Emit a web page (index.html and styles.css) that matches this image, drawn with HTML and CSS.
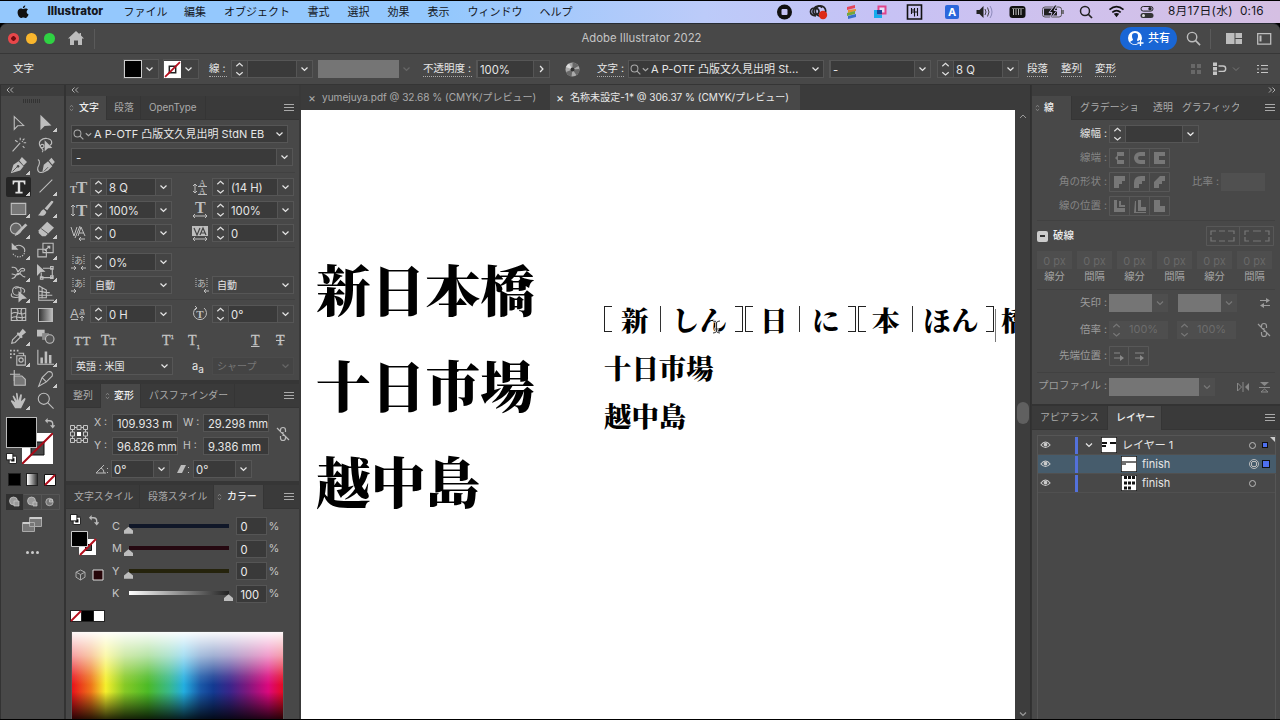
FILE: index.html
```html
<!DOCTYPE html>
<html lang="ja">
<head>
<meta charset="utf-8">
<title>Adobe Illustrator 2022</title>
<link rel="stylesheet" href="styles.css">
</head>
<body>
<svg class="defs" width="0" height="0">
  <symbol id="chev" viewBox="0 0 10 10"><path d="M2 3.6 5 6.4 8 3.6" fill="none" stroke="currentColor" stroke-width="1.3"/></symbol>
  <symbol id="step" viewBox="0 0 14 16"><path d="M3.8 5.2 7 2.4l3.2 2.8M3.8 11.2 7 14l3.2-2.8" fill="none" stroke="currentColor" stroke-width="1.2"/></symbol>
  <symbol id="burger" viewBox="0 0 10 10"><path d="M0 1.5h10M0 4.5h10M0 7.5h10" stroke="currentColor"/></symbol>
  <symbol id="updn" viewBox="0 0 6 10"><path d="M1 4 3 1.5 5 4M1 6l2 2.5L5 6" fill="none" stroke="#999" stroke-width=".8"/></symbol>
  <symbol id="dbl-l" viewBox="0 0 8 6"><path d="M3.500.500 1 3l2.500 2.500M7 .5 4.500 3 7 5.500" fill="none" stroke="#bbb" stroke-width=".9"/></symbol>
  <symbol id="none" viewBox="0 0 16 16"><path fill="#fff" d="M0 0h16v16H0z"/><path d="M5 5h6v6H5z" fill="#fff" stroke="#222" stroke-width="1.4"/><path d="M1 15 15 1" stroke="#b40e1c" stroke-width="1.7"/></symbol>
  <symbol id="search" viewBox="0 0 16 16"><circle cx="6.5" cy="6.5" r="5" fill="none" stroke="currentColor" stroke-width="1.5"/><path d="m10 10 5 5" stroke="currentColor" stroke-width="1.7"/></symbol>
  <symbol id="swap" viewBox="0 0 12 12"><path d="M3 3h3q3.500 0 3.500 3.500V9" fill="none" stroke="#bbb" stroke-width="1.500"/><path d="M4 0v6L1 3zM6.500 8h6l-3 3.500z" fill="#bbb"/></symbol>
  <symbol id="deflt" viewBox="0 0 12 12"><path d="M4.500 4.500h6v6h-6z" stroke="#fff" stroke-width="2.500" fill="#111"/><path d="M3.500 3.500h8v8h-8z" fill="none" stroke="#111"/><path d="M.5.500h7v7h-7z" fill="#fff" stroke="#111"/></symbol>
  <symbol id="eye" viewBox="0 0 12 10"><path d="M1 5q5-6.500 10 0-5 5.500-10 0z" fill="none" stroke="#ccc" stroke-width="1.200"/><circle cx="6" cy="4.600" r="2" fill="#ccc"/></symbol>
  <symbol id="unlink" viewBox="0 0 14 16"><path d="M4.500 6V4a2.500 2.500 0 0 1 5 0v2M4.500 10v2a2.500 2.500 0 0 0 5 0v-2M7 6v4M1 2l12 12" fill="none" stroke="currentColor" stroke-width="1.200"/></symbol>
</svg>

<header class="menubar">
  <svg viewBox="0 0 14 16" class="apple"><path d="M9.600 0c.1 1.900-1 3.300-2.700 3.500C6.700 1.800 8 .4 9.600 0zM7.200 4.600C8 4.600 9 3.700 10.200 3.800c1.100 0 2.100.5 2.700 1.400-2.500 1.600-2 4.700.6 5.700-.6 1.700-2.100 4.100-3.400 4.100-1 0-1.500-.6-2.700-.6S5.600 15 4.700 15C2.600 15 .5 11 .7 8.100.9 5.300 2.600 3.800 4.500 3.800c1.100 0 1.900.8 2.700.8z"/></svg>
  <b>Illustrator</b><span>ファイル</span><span>編集</span><span>オブジェクト</span><span>書式</span><span>選択</span><span>効果</span><span>表示</span><span>ウィンドウ</span><span>ヘルプ</span>
  <svg width="390" height="20" viewBox="776 2 390 20" class="status">
    <circle cx="784.500" cy="12" r="7.500" fill="#111"/><rect x="781.500" y="9" width="6" height="6" rx="1" fill="#c5c4f5"/>
    <g fill="none" stroke="#222" stroke-width="1.700"><path d="M816 16c-3-.3-5.500-1.800-5.500-4.300 0-2.400 2-3.700 4-3.700 1-2 5.500-3.300 7.500-.3"/><circle cx="816" cy="11.500" r="3"/><circle cx="820.500" cy="11" r="5.200"/></g><circle cx="823" cy="15" r="4.200" fill="#dd2a16"/>
    <path d="m847 7 8-2v3l-8 2z" fill="#e4465b"/><path d="m848 10 8-1v2l-8 2z" fill="#e99232"/><path d="m847 13 8-2v3l-8 2z" fill="#71a83d"/><path d="m848 16 8-2v3l-8 2z" fill="#3870cb"/>
    <path d="M874 10h8v8h-8z" fill="#15acee"/><path d="M878.500 6.500h7v7h-7z" fill="#fff" fill-opacity=".5" stroke="#e0458b" stroke-width="2"/><path d="M877 10h5v4h-5z" fill="#19459c"/>
    <path d="M907.500 5h14v14h-14z" fill="none" stroke="#111" stroke-width="1.600"/><path d="M911.500 8v4h6M911.500 10h3M914.500 8v8.500M917.500 8v8M911.500 12v2" stroke="#111" stroke-width="1.100" fill="none"/>
    <rect x="945" y="5" width="14" height="14" rx="2" fill="#2b67dc"/><text x="952" y="16" text-anchor="middle" font-size="11" font-weight="700" fill="#fff">A</text>
    <path d="M976.500 10h3l4-4v12l-4-4h-3z" fill="#222"/><path d="M985 9q2 3 0 6M987.500 7.500q3 4.500 0 9" fill="none" stroke="#444"/><path d="M990 6q4 6 0 12" fill="none" stroke="#8d8abb"/>
    <rect x="1009.500" y="6" width="16" height="12" rx="3" fill="#111"/><path d="M1013.500 9v6M1016 9v6M1018.500 9v6M1021 9v6" stroke="#bbb"/><path d="M1012 8.500h12" stroke="#bbb" stroke-width=".6"/>
    <rect x="1042.500" y="7" width="19" height="10" rx="2.500" fill="none" stroke="#555"/><path d="M1044 8.500h13v7h-13z" fill="#222"/><path d="m1055 5-6 7.500h3l-2 6.500 7-8.500h-3l3-5.500z" fill="#111" stroke="#cfc3ee" stroke-width=".9"/><path d="M1063 10v4" stroke="#555" stroke-width="1.500"/>
    <circle cx="1085" cy="11" r="4.500" fill="none" stroke="#222" stroke-width="1.500"/><path d="m1088 14 4 4" stroke="#222" stroke-width="1.700"/>
    <g fill="none" stroke="#111" stroke-width="1.700"><path d="M1109.500 9.700q7-6 14 0M1112.300 12.400q4.200-3.600 8.400 0"/></g><path d="M1113.800 13.800 1116.500 17.300l2.700-3.500q-2.700-1.800-5.400 0z" fill="#111"/>
    <rect x="1141" y="6.500" width="12" height="4.600" rx="2.300" fill="none" stroke="#222"/><circle cx="1150" cy="8.800" r="1.700" fill="#222"/><rect x="1140.500" y="13" width="13" height="5" rx="2.500" fill="#333"/><circle cx="1143.500" cy="15.500" r="1.500" fill="#ddd"/>
  </svg>
  <span class="clock">8月17日(水)&nbsp; 0:16</span>
</header>

<div class="window">
<div class="titlebar">
  <div class="lights"><i class="r"></i><i class="y"></i><i class="g"></i></div>
  <svg width="16" height="15" viewBox="0 0 16 15"><path d="M8 0 0 7.500h2V14h4V9.500h4V14h4V7.500h2L13 4.500V2h-1.500v1.200z" fill="#bdbdbd"/></svg>
  <i class="sep"></i>
  <div class="title">Adobe Illustrator 2022</div>
  <div class="share"><svg width="17" height="17" viewBox="0 0 17 17"><circle cx="8" cy="8" r="7" fill="#fff"/><path d="M8 3a3 3 0 0 0-3 3.200C5 8 6 9 6 10l-3 2q5 4.500 9 0l-2-1.500C10 9 11 8 11 6.200A3 3 0 0 0 8 3z" fill="#1a66d6"/><path d="M13.500 10v6M10.500 13h6" stroke="#1a66d6" stroke-width="3.500"/><path d="M13.500 10v6M10.500 13h6" stroke="#fff" stroke-width="1.300"/></svg>共有</div>
  <svg class="tsearch" width="15" height="15"><use href="#search"/></svg>
  <i class="sep s2"></i>
  <svg class="tlay" width="16" height="11"><path d="M0 0h8.500v11H0zM9.500 0H16v5H9.500zM9.500 6H16v5H9.500z" fill="#bdbdbd"/></svg>
  <svg class="tpan" width="15" height="12"><path d="M.7.700h13v10.500H.7z" fill="none" stroke="#bdbdbd" stroke-width="1.300"/><path d="M2.500 2.500h2v6h-2z" fill="#bdbdbd"/></svg>
</div>

<div class="control">
  <span class="ctl-name">文字</span>
  <div class="sw"><i class="black"></i><svg class="dd"><use href="#chev"/></svg></div>
  <div class="sw s2"><svg width="17" height="17"><use href="#none"/></svg><svg class="dd"><use href="#chev"/></svg></div>
  <span class="u c-line">線 :</span>
  <div class="box c-w"><svg class="st"><use href="#step"/></svg><i class="in"></i><svg class="dd"><use href="#chev"/></svg></div>
  <i class="graybox"></i><svg class="dd dim"><use href="#chev"/></svg>
  <span class="u c-op">不透明度 :</span>
  <div class="box c-opv"><span class="in">100%</span><svg class="dd rot"><use href="#chev"/></svg></div>
  <svg class="wheel" width="15" height="15" viewBox="0 0 15 15"><circle cx="7.500" cy="7.500" r="7" fill="#aaa"/><path d="M7.500 7.500V.5a7 7 0 0 1 6 3.500zM7.500 7.500l7-.5a7 7 0 0 1-3 6.200zM7.500 7.500l-1 7a7 7 0 0 1-5.500-4.500z" fill="#686868"/><path d="M7.500 7.500 1 5a7 7 0 0 1 3-3.600z" fill="#ddd"/><circle cx="7.500" cy="7.500" r="2" fill="#333"/></svg>
  <span class="u c-ch">文字 :</span>
  <div class="box c-font"><svg width="11" height="11"><use href="#search"/></svg><svg class="tinyc"><use href="#chev"/></svg><span class="fname">A P-OTF 凸版文久見出明 St...</span><svg class="dd"><use href="#chev"/></svg></div>
  <div class="box c-sty"><span class="in">-</span><svg class="dd"><use href="#chev"/></svg></div>
  <div class="box c-sz"><svg class="st"><use href="#step"/></svg><span class="in">8 Q</span><svg class="dd"><use href="#chev"/></svg></div>
  <span class="u l1">段落</span><span class="u l2">整列</span><span class="u l3">変形</span>
  <svg class="ctl-icons" width="80" height="16" viewBox="0 0 80 16"><path d="M1 3h4v4H1zM7 3h4v4H7zM1 9h4v4H1zM7 9h4v4H7z" fill="#686868"/><path d="M23 1.500h4v3.500h-4zM23 6h4v3.500h-4zM23 10.500h4V14h-4z" fill="#c5c5c5"/><path d="M28.500 5H33a2.700 2.700 0 0 1 0 5.400h-4.500" fill="none" stroke="#c5c5c5" stroke-width="1.400"/><path d="m43 6.500 3 3 3-3" fill="none" stroke="#777"/><path d="M67 4.500h2M71 4.500h7M67 8h2M71 8h7M67 11.500h2M71 11.500h7" stroke="#c5c5c5" stroke-width="1.200"/></svg>
</div>

<main>
<aside class="tools">
  <div class="collapse"><svg width="8" height="6"><use href="#dbl-l"/></svg></div>
  <div class="grip"></div>
  <div class="toolgrid">
    <svg class="nf" viewBox="0 0 20 20"><path d="m5 3 11 10.500-7 .4L5 18z" class="ln"/></svg>
    <svg viewBox="0 0 20 20"><path d="m4 1 13 12.500-8 .5L4 19z"/></svg>
    <svg class="nf" viewBox="0 0 20 20"><path d="m3 18 9-10M14 7l1-1" stroke-width="2.200" class="ln"/><path d="M12 2v3M17 3l-2 2M19 8h-3M6 5l3 2M15 12l2 2" class="ln"/></svg>
    <svg class="nf" viewBox="0 0 20 20"><path d="M4 13C0 6 7 2 12 3c7 1 6 7 3 8M4 13c3 2 6-1 3-3-3-1-4 3-2 4 2 2 3 3 1 5" class="ln"/><path d="m9 5 9 9-5 .5L9 18z"/></svg>
    <svg viewBox="0 0 20 20"><path d="M1 19 4 9l6-4 6 6-4 5zM11 4l3-4 6 6-4 4z"/><path d="m3 17 6-6" stroke="#484848"/><circle cx="9.500" cy="11" r="1.500" fill="#484848"/></svg>
    <svg class="nf" viewBox="0 0 20 20"><path d="m6 19 2-10 5-4 5 6-5 5zM14 4l3-3 4 5-3 3z"/><path d="M1 3c3 1 2 6 0 9-1 4 1 7 5 6" class="ln"/><path d="m8 17 5-5" stroke="#484848"/></svg>
    <span class="sel"><svg viewBox="0 0 20 20"><path d="M2 2h16v5h-1.500l-1-3H11.500v12h3v2h-9v-2h3V4H4.500l-1 3H2z" fill="#e0e0e0"/></svg></span>
    <svg viewBox="0 0 20 20"><path d="M3 17 18 2" class="ln"/></svg>
    <svg viewBox="0 0 20 20"><path d="M1.500 4h17v13h-17z" fill="#777" class="fl"/></svg>
    <svg viewBox="0 0 20 20"><path d="M9 10 17 1q3 0 2 2l-7 9zM8 11l3 3c-1 5-5 5-10 4 3-1 3-6 7-7z"/></svg>
    <svg viewBox="0 0 20 20"><circle cx="7" cy="9" r="6.500" class="fl" fill="#666"/><path d="M7 14 18 3l2.500 2L9.500 16l-4 2z"/></svg>
    <svg viewBox="0 0 20 20"><path d="M2 11 12 1l8 7L10 18H6l-4-4z"/><path d="m5 9 8 6" stroke="#484848"/></svg>
    <svg viewBox="0 0 20 20"><path d="M5 6c6-5 14 0 12 6" class="ln"/><path d="M17 13c-2 6-11 6-14 0" class="ln" stroke-dasharray="1.500 1.500"/><path d="M2 1v8h8z"/></svg>
    <svg viewBox="0 0 20 20"><path d="M7 1.500h12v11H7zM1 8.500h10v9H1zM9 10l6-5M12 5h3v3" class="ln"/></svg>
    <svg viewBox="0 0 20 20"><path d="M2 4c4-1 6 1 7 5 2 0 2-4 6-4 4 1 2 4-1 3-3 1-2 5-6 5-3 0-4-2-6-1M2 17c6 0 4-6 8-6 5 0 3 5 8 4" class="ln" stroke-width="2"/></svg>
    <svg viewBox="0 0 20 20"><path d="M7 5h11v11H5v-6M16 3h3v3h-3zM16 14h3v3h-3zM4 15h3v3H4z" class="ln"/><path d="m0 0 10 9-5.500.5L0 14z"/></svg>
    <svg viewBox="0 0 20 20"><circle cx="8" cy="7" r="5" class="ln"/><path d="M2 10c-3 5 7 6 10 3M6 4c8-3 14 2 10 5" class="ln"/><path d="m10 7 10 9-5.500.5-4.500 4z"/></svg>
    <svg viewBox="0 0 20 20"><path d="M2 1v17h18M2 1l9 5v9H2M6 3v13M2 7l9 2M2 12h9M11 12h7M11 9h4" class="ln"/></svg>
    <svg class="nf" viewBox="0 0 20 20"><path d="M1.500 3h17v14h-17zM8 3c5 5-4 9 1 14M2 9c6-5 10 4 16-1M2 14c5-4 10 2 16-1M14 3c-4 6 3 8 0 14" class="ln"/></svg>
    <i class="gradtool"></i>
    <svg viewBox="0 0 20 20"><path d="m2 18 1-4 7-7 3 3-7 7z" class="ln"/><path d="m9 5 2 1 4-5 4 4-5 4 1 2-2 1-5-5z"/></svg>
    <svg class="nf" viewBox="0 0 20 20"><path d="M0 2h9v8H0z"/><path d="M6 6h8v8H6z" fill="#888"/><circle cx="15" cy="13" r="5" class="fl" fill="#555"/></svg>
    <svg viewBox="0 0 20 20"><path d="M8 8h10v11H8zM10 5h6v3" class="ln"/><circle cx="13" cy="13" r="2.500" class="ln"/><path d="M0 1h2v2H0zM4 1h2v2H4zM8 1h2v2H8zM0 5h2v2H0zM4 5h2v2H4zM0 9h2v2H0z"/></svg>
    <svg viewBox="0 0 20 20"><path d="M1 1v17h19" class="ln"/><path d="M4 10h3v7H4zM9 3h3v14H9zM14 7h3v10h-3z"/></svg>
    <svg class="nf" viewBox="0 0 20 20"><path d="M5 0v13M0 5h12" class="ln"/><path d="M5 7h9l4 4v7H5z" fill="#777" class="fl"/></svg>
    <svg viewBox="0 0 20 20"><path d="m2 19 4-10 7-7q6-1 5 5l-7 7zM6 9l5 5" class="ln"/></svg>
    <svg viewBox="0 0 20 20"><path d="M6 19 1 11q0-2 2-1l3 2-3-7q1-2 2 0l3 5-1-8q1-2 2 0l1 8 2-7q2-1 2 1l-1 7 4-4q2 0 1 2l-5 10z"/></svg>
    <svg class="nf" viewBox="0 0 20 20"><circle cx="8" cy="8" r="6.500" class="ln"/><path d="m12.500 12.500 7 7" class="ln" stroke-width="2.500"/></svg>
  </div>
  <div class="fillstroke">
    <i class="stroke-sw"><svg width="31" height="31" viewBox="0 0 31 31"><path d="M0 0h31v31H0z" fill="#fff"/><path d="M9 9h13v13H9z" fill="#484848" stroke="#111"/><path d="M0 31 31 0" stroke="#a70b18" stroke-width="2"/></svg></i>
    <i class="fill-sw"></i><svg class="swp"><use href="#swap"/></svg><svg class="dft"><use href="#deflt"/></svg>
  </div>
  <div class="trow"><i class="m1"></i><i class="m2"></i><svg width="12" height="12" viewBox="0 0 12 12"><path d="M.5.500h11v11H.5z" fill="#fff" stroke="#111"/><path d="M1 11 11 1" stroke="#b20d1c" stroke-width="2"/></svg></div>
  <svg class="modes" width="54" height="16" viewBox="0 0 54 16"><path d="M0 0h17v16H0z" fill="#303030"/><path d="M17.500.500h36v15h-36M35.500 0v16" fill="none" stroke="#555"/><g fill="#999" stroke="#ccc" stroke-width=".7"><circle cx="7.500" cy="7" r="4"/><path d="M8 7h5v5H8z"/><circle cx="25.500" cy="7" r="4"/><path d="M27 8h4v4h-4z"/><circle cx="43.500" cy="8" r="3.700" fill="#777"/><path d="M43.500 5.500h3V8h-3z"/></g></svg>
  <svg class="screens" width="20" height="15" viewBox="0 0 20 15"><path d="M.5 5.500h12v9H.5zM7.500.500h12v9h-12z" fill="#777" stroke="#aaa"/><path d="M1 6h7M8 1h12" stroke="#ccc" stroke-width="2"/></svg>
  <div class="dots"><i></i><i></i><i></i></div>
</aside>

<aside class="left">
  <div class="collapse"><svg width="8" height="6"><use href="#dbl-l"/></svg></div>
  <section>
    <div class="tabs t-char"><b><svg class="ud"><use href="#updn"/></svg>文字</b><span>段落</span><span>OpenType</span><em></em><svg class="bg"><use href="#burger"/></svg></div>
    <div class="char">
      <div class="box font1"><svg width="11" height="11"><use href="#search"/></svg><svg class="tinyc"><use href="#chev"/></svg><span class="fname">A P-OTF 凸版文久見出明 StdN EB</span><svg class="dd"><use href="#chev"/></svg></div>
      <div class="box font2"><span class="in">-</span><svg class="dd"><use href="#chev"/></svg></div>
      <hr>
      <div class="crow">
        <svg class="ci" viewBox="0 0 18 16"><text x="0" y="14" font-size="10">T</text><text x="6" y="14" font-size="17">T</text></svg>
        <div class="box"><svg class="st"><use href="#step"/></svg><span class="in">8 Q</span><svg class="dd"><use href="#chev"/></svg></div>
        <svg class="ci" viewBox="0 0 18 16"><g class="thin"><text x="8" y="7" font-size="9">A</text><text x="8" y="15" font-size="9">A</text></g><path d="M7 7.500h9M7 15.500h9M4 5v9M2 7l2-2 2 2M2 12l2 2 2-2" class="ln"/></svg>
        <div class="box"><svg class="st"><use href="#step"/></svg><span class="in">(14 H)</span><svg class="dd"><use href="#chev"/></svg></div>
      </div>
      <div class="crow">
        <svg class="ci" viewBox="0 0 18 16"><path d="M3 3v11M1 5l2-2 2 2M1 12l2 2 2-2" class="ln"/><text x="6" y="14" font-size="17">T</text></svg>
        <div class="box"><svg class="st"><use href="#step"/></svg><span class="in">100%</span><svg class="dd"><use href="#chev"/></svg></div>
        <svg class="ci" viewBox="0 0 18 16"><text x="4" y="11" font-size="16">T</text><path d="M2 14h14M4 12l-2 2 2 2M14 12l2 2-2 2" class="ln"/></svg>
        <div class="box"><svg class="st"><use href="#step"/></svg><span class="in">100%</span><svg class="dd"><use href="#chev"/></svg></div>
      </div>
      <div class="crow">
        <svg class="ci" viewBox="0 0 18 16"><path d="m1 2 3 9 3-9M5 13 10 1M8 11l3-9 4 9M9 8h5M9 14h6M11 12l-2 2 2 2" class="ln"/></svg>
        <div class="box"><svg class="st"><use href="#step"/></svg><span class="in">0</span><svg class="dd"><use href="#chev"/></svg></div>
        <svg class="ci" viewBox="0 0 18 16"><path d="M1 1h16v10H1z"/><path d="m3 3 3 7 3-7M9 10l3-7 3 7M10 8h4" fill="none" stroke="#444" stroke-width="1.200"/><path d="M2 14h14M4 12l-2 2 2 2M14 12l2 2-2 2" class="ln"/></svg>
        <div class="box"><svg class="st"><use href="#step"/></svg><span class="in">0</span><svg class="dd"><use href="#chev"/></svg></div>
      </div>
      <hr>
      <div class="crow">
        <svg class="ci" viewBox="0 0 18 16"><text x="4" y="10" font-size="9" class="ja">あ</text><path d="M3 1v10M14 1v10" class="ln" stroke-dasharray="1 1"/><path d="M1 14h5M4 12l2 2-2 2M16 14h-5M13 12l-2 2 2 2" class="ln"/></svg>
        <div class="box"><svg class="st"><use href="#step"/></svg><span class="in">0%</span><svg class="dd"><use href="#chev"/></svg></div>
      </div>
      <div class="crow">
        <svg class="ci" viewBox="0 0 18 16"><text x="4" y="10" font-size="9" class="ja">あ</text><path d="M3 1v10M14 1v10" class="ln" stroke-dasharray="1 1"/><path d="M1 14h5M4 12l2 2-2 2" class="ln"/></svg>
        <div class="box pick"><span>自動</span><svg class="dd"><use href="#chev"/></svg></div>
        <svg class="ci" viewBox="0 0 18 16"><text x="6" y="10" font-size="9" class="ja">あ</text><path d="M5 1v10M16 1v10" class="ln" stroke-dasharray="1 1"/><path d="M18 14h-5M15 12l-2 2 2 2" class="ln"/></svg>
        <div class="box pick"><span>自動</span><svg class="dd"><use href="#chev"/></svg></div>
      </div>
      <hr>
      <div class="crow">
        <svg class="ci" viewBox="0 0 18 16"><text x="0" y="12" font-size="13" class="sans">A</text><text x="10" y="7" font-size="8" class="sans">a</text><path d="M1 13.500h7M9 8h6M12 15v-5M10 12l2-2 2 2" class="ln"/></svg>
        <div class="box"><svg class="st"><use href="#step"/></svg><span class="in">0 H</span><svg class="dd"><use href="#chev"/></svg></div>
        <svg class="ci" viewBox="0 0 18 16"><path d="M5 2a6.500 6.500 0 1 0 8 0M4 0l2 2-2 2" class="ln"/><text x="5.300" y="12" font-size="11">T</text></svg>
        <div class="box"><svg class="st"><use href="#step"/></svg><span class="in">0°</span><svg class="dd"><use href="#chev"/></svg></div>
      </div>
      <div class="tt"><span>TT</span><span>T<small>T</small></span><span>T<sup>1</sup></span><span>T<sub>1</sub></span><span class="ul">T</span><span class="stk">T</span></div>
      <div class="lang"><div class="box pick"><span>英語 : 米国</span><svg class="dd"><use href="#chev"/></svg></div><span class="aa">a<sub>a</sub></span><div class="box pick off"><span>シャープ</span><svg class="dd"><use href="#chev"/></svg></div></div>
    </div>
  </section>
  <section>
    <div class="tabs t-tr"><span>整列</span><b><svg class="ud"><use href="#updn"/></svg>変形</b><span>パスファインダー</span><em></em><svg class="bg"><use href="#burger"/></svg></div>
    <div class="trans">
      <svg class="ref" width="18" height="18" viewBox="0 0 18 18"><g fill="none" stroke="#c4c4c4"><path d="M.5.500h4v4h-4zM7 .5h4v4H7zM13.500.500h4v4h-4zM.5 7h4v4h-4zM13.500 7h4v4h-4zM.5 13.500h4v4h-4zM7 13.500h4v4H7zM13.500 13.500h4v4h-4zM4.500 2.500H7M11 2.500h2.500M2.500 4.500V7M15.500 4.500V7M2.500 11v2.500M15.500 11v2.500M4.500 15.500H7M11 15.500h2.500"/></g><path d="M7 7h4v4H7z" fill="#fff"/></svg>
      <div class="xy">
        <span>X :</span><span class="fld">109.933 m</span><span>W :</span><span class="fld">29.298 mm</span>
        <span>Y :</span><span class="fld">96.826 mm</span><span>H :</span><span class="fld">9.386 mm</span>
      </div>
      <svg class="unl" width="14" height="16"><use href="#unlink"/></svg>
      <div class="ang"><svg width="14" height="10"><path d="M9 1 1 9h10M6 4q3 1 3 5" fill="none" stroke="#bbb"/><path d="M12 4h1v1h-1zM12 8h1v1h-1z" fill="#bbb"/></svg><div class="box"><span class="in">0°</span><svg class="dd"><use href="#chev"/></svg></div><svg class="shr" width="14" height="10"><path d="M4 1h5L5 9H0z" fill="#bbb"/><path d="M11 3h1v1h-1zM11 8h1v1h-1z" fill="#bbb"/></svg><div class="box"><span class="in">0°</span><svg class="dd"><use href="#chev"/></svg></div></div>
    </div>
  </section>
  <section class="last">
    <div class="tabs t-col"><span>文字スタイル</span><span>段落スタイル</span><b><svg class="ud"><use href="#updn"/></svg>カラー</b><em></em><svg class="bg"><use href="#burger"/></svg></div>
    <div class="color">
      <svg width="40" height="80" viewBox="0 0 40 80"><svg x="4" y="5" width="11" height="11"><use href="#deflt"/></svg><svg x="22" y="6" width="11" height="11"><use href="#swap"/></svg>
        <path d="M13 30h17v16H13z" fill="#fff"/><path d="M19.500 35.500h6v6h-6z" fill="#484848" stroke="#111"/><path d="m14 46 16-16" stroke="#b40e1c" stroke-width="2"/><path d="M5.500 22.500h16v15h-16z" fill="#000" stroke="#ccc"/>
        <path d="m14.500 61-4.500 2.200v5L14.500 71l4.500-2.800v-5zM10 63.200l4.500 2.300 4.500-2.300M14.500 65.500V71" fill="none" stroke="#aaa"/><path d="M27 61h10v10H27z" fill="#260509" stroke="#ddd"/></svg>
      <div class="sliders">
        <span>C</span><i class="bar c"><u></u></i><span class="fld">0</span><span>%</span>
        <span>M</span><i class="bar m"><u></u></i><span class="fld">0</span><span>%</span>
        <span>Y</span><i class="bar y"><u></u></i><span class="fld">0</span><span>%</span>
        <span>K</span><i class="bar k"><u></u></i><span class="fld">100</span><span>%</span>
      </div>
      <svg class="mini" width="35" height="12" viewBox="0 0 35 12"><path d="M0 0h35v12H0z" fill="#222"/><path d="M1 1h10v10H1zM24 1h10v10H24z" fill="#fff"/><path d="M12 1h11v10H12z" fill="#000"/><path d="M1 11 11 1" stroke="#b40e1c" stroke-width="1.800"/></svg>
      <div class="spectrum"></div>
    </div>
  </section>
</aside>

<div class="doc">
  <div class="doctabs"><span><i>×</i><em>yumejuya.pdf @ 32.68 % (CMYK/プレビュー)</em></span><b><i>×</i><em>名称未設定-1* @ 306.37 % (CMYK/プレビュー)</em></b></div>
  <div class="docbody">
    <div class="artboard">
      <div class="big"><p>新日本橋</p><p>十日市場</p><p>越中島</p></div>
      <div class="small">
        <p class="ruby"><i class="br"></i><span>新</span><i class="bar1"></i><span>しん</span><i class="br rt"></i><i class="br"></i><span>日</span><i class="bar1"></i><span>に</span><i class="br rt"></i><i class="br"></i><span>本</span><i class="bar1"></i><span>ほん</span><i class="br rt"></i><i class="caret"></i><span>橋</span></p>
        <p>十日市場</p><p>越中島</p>
      </div>
      <svg class="ibeam" width="9" height="14" viewBox="0 0 9 14"><path d="M1 1q3.500 0 3.500 2V11q0 2-3.500 2M8 1Q4.500 1 4.500 3V11q0 2 3.500 2M2 9h5" fill="none" stroke="#fff" stroke-width="2.400"/><path d="M1 1q3.500 0 3.500 2V11q0 2-3.500 2M8 1Q4.500 1 4.500 3V11q0 2 3.500 2M2 9h5" fill="none" stroke="#333"/></svg>
    </div>
    <div class="vscroll"><svg width="10" height="10"><path d="M2 8 5 5l3 3" fill="none" stroke="#999"/></svg><i></i><svg width="10" height="10"><use href="#chev"/></svg></div>
  </div>
</div>

<aside class="right">
  <div class="collapse"><svg class="flipx" width="8" height="6"><use href="#dbl-l"/></svg></div>
  <div class="tabs t-st"><b><svg class="ud"><use href="#updn"/></svg>線</b><span>グラデーション</span><span>透明</span><span>グラフィックス</span><em></em><svg class="bg"><use href="#burger"/></svg></div>
  <div class="strokep">
    <div class="rr on"><label>線幅 :</label><div class="box w85"><svg class="st"><use href="#step"/></svg><i class="in"></i><svg class="dd"><use href="#chev"/></svg></div></div>
    <div class="rr"><label>線端 :</label><svg class="tri" width="61" height="20" viewBox="0 0 61 20"><path d="M.5.500h60v19H.5zM20.500 0v20M40.500 0v20" class="fr"/><path d="M8 4h7v4H9v4h6v4H8v-4L6 10l2-2zM36 4v4h-5a2 2 0 0 0 0 4h5v4h-5a6 6 0 0 1 0-12zM45 4h11v4h-6v4h6v4H45z"/></svg></div>
    <div class="rr"><label>角の形状 :</label><svg class="tri" width="61" height="20" viewBox="0 0 61 20"><path d="M.5.500h60v19H.5zM20.500 0v20M40.500 0v20" class="fr"/><path d="M5 4h11v5h-3v3h-3v4H5zM25 16v-5q0-7 7-7h4v5h-3v3h-3v4zM45 16v-6l6-6h5v5h-3v3h-3v4z"/></svg><label class="ratio">比率 :</label><i class="gf"></i></div>
    <div class="rr"><label>線の位置 :</label><svg class="tri" width="61" height="20" viewBox="0 0 61 20"><path d="M.5.500h60v19H.5zM20.500 0v20M40.500 0v20" class="fr"/><path d="M5 4h3v8h8v4H5zM10 5h2v4h4v2h-6zM29 4h3v7h5v4h-8zM26 5h1v11h10v1H25zM45 4h6v6h5v6H45z"/></svg></div>
    <hr>
    <div class="dashrow"><i class="chk"></i><b>破線</b><svg width="68" height="20" viewBox="0 0 68 20"><path d="M.5.500h67v19H.5zM33.500 0v20" class="fr"/><path d="M5 9V5h5M13 5h6M22 5h6v3M5 11v4h5M13 15h6M22 15h6v-4M43 5h-4v4M47 5h8M59 5h4v4M39 11v4h4M47 15h8M63 11v4h-4" fill="none" stroke="#777" stroke-width="1.200"/></svg></div>
    <div class="dashes"><span><i>0 px</i>線分</span><span><i>0 px</i>間隔</span><span><i>0 px</i>線分</span><span><i>0 px</i>間隔</span><span><i>0 px</i>線分</span><span><i>0 px</i>間隔</span></div>
    <hr>
    <div class="rr mid"><label>矢印 :</label><i class="g1"></i><svg class="dd"><use href="#chev"/></svg><i class="g1 g2"></i><svg class="dd"><use href="#chev"/></svg><svg class="ex" width="12" height="12"><path d="M1 3.500h7M2 8.500h9" stroke="currentColor"/><path d="M7 1l4 2.500L7 6zM5 6 1 8.500 5 11z" fill="currentColor"/></svg></div>
    <div class="rr mid"><label>倍率 :</label><i class="pc"><svg class="st"><use href="#step"/></svg>100%</i><i class="pc p2"><svg class="st"><use href="#step"/></svg>100%</i><svg class="ex2" width="14" height="16"><use href="#unlink"/></svg></div>
    <div class="rr mid"><label>先端位置 :</label><svg class="tri two" width="40" height="20" viewBox="0 0 40 20"><path d="M.5.500h39v19H.5zM19.500 0v20" class="fr"/><path d="M5 7h6M5 12h8M26 7h9M26 12h7" stroke="#888" fill="none"/><path d="m11 9 4 3-4 3zM31 9l4 3-4 3z" fill="#888"/></svg></div>
    <hr>
    <div class="rr mid prof"><label>プロファイル :</label><i class="g3"></i><svg class="dd"><use href="#chev"/></svg><svg class="flip" width="34" height="14" viewBox="0 0 34 14"><path d="M1.500 3v8l4-4zM7 2v10" fill="none" stroke="#888"/><path d="M13 3v8L9 7zM24 2h9l-4.500 4z" fill="#888"/><path d="M23 7.500h11M25 12l3.500-3 3.500 3z" fill="none" stroke="#888"/></svg></div>
  </div>
  <div class="tabs t-ly"><span>アピアランス</span><b>レイヤー</b><em></em><svg class="bg"><use href="#burger"/></svg></div>
  <div class="layers">
    <div class="ly"><svg class="eye"><use href="#eye"/></svg><i class="lb"></i><svg class="dd"><use href="#chev"/></svg><svg class="th" viewBox="0 0 16 16"><path d="M0 0h16v16H0z" fill="#fff" stroke="#111" stroke-width="1.500"/><path d="M1 6h5M1 9h4M9 6h6" stroke="#111" stroke-width="2"/></svg><span>レイヤー 1</span><i class="ring"></i><i class="sq"></i><i class="cor"></i></div>
    <div class="ly cur sub"><svg class="eye"><use href="#eye"/></svg><i class="lb"></i><svg class="th" viewBox="0 0 16 16"><path d="M0 0h16v16H0z" fill="#fff" stroke="#111" stroke-width="1.500"/><path d="M1 6h14M1 8h4" stroke="#444" stroke-width="1.500"/></svg><span>finish</span><i class="ring dbl"></i><i class="sq lg"></i></div>
    <div class="ly sub"><svg class="eye"><use href="#eye"/></svg><i class="lb"></i><svg class="th" viewBox="0 0 16 16"><path d="M0 0h16v16H0z" fill="#fff" stroke="#111" stroke-width="1.500"/><path d="M3 2.500h11M3 8h11M3 13h8" stroke="#111" stroke-width="3" stroke-dasharray="3 1"/></svg><span>finish</span><i class="ring"></i></div>
  </div>
</aside>
</main>
</div>
</body>
</html>
```
FILE: styles.css
```css
*{box-sizing:border-box}
body{margin:0;width:1280px;height:720px;overflow:hidden;background:#000;padding:1px 0;display:flex;flex-direction:column;font:10px/1 Inter,"Noto Sans CJK JP",sans-serif;color:#e6e6e6;white-space:nowrap}
i,em{font-style:normal}
p{margin:0}
svg{flex:none;display:block}
.defs{position:absolute}
.menubar{height:22px;flex:none;display:grid;grid-template-columns:17px 30.500px 76px 60.500px 40px 83.500px 40px 40px 40px 40px 72px 236.500px 391px 1fr;align-items:center;background:linear-gradient(90deg,#94c8fd 0,#94c8fd 35%,#bccbf9 55%,#c6c2f5 68%,#d0c1ec 85%,#d5bfe3);color:#15171c;font-size:11px}
.apple{grid-column:2;width:12px;height:14px;fill:#111}
.menubar b{font-size:11.500px;font-weight:800}
.clock{font-size:11.800px;letter-spacing:.25px;padding-left:1px}
.status{font-family:Inter,sans-serif}
.window{flex:1;min-height:0;display:flex;flex-direction:column;background:#484848;border-radius:7px 7px 0 0;border-top:1px solid #272c33}
.titlebar{height:30px;flex:none;display:flex;align-items:center;border-bottom:1px solid #373737;padding-left:8px}
.lights{display:flex;gap:7.500px;width:60px}
.lights i{width:10.500px;height:10.500px;border-radius:50%}
.lights .r{background:radial-gradient(circle,#6f0b10 0 2px,#e8474a 2.500px)}
.lights .y{background:#f9b62d}.lights .g{background:#2fd243}
.sep{width:1px;height:20px;background:#5a5a5a;margin-left:10px}
.title{width:1026px;text-align:center;font-size:11.300px;color:#c5c5c5;padding-left:67px;letter-spacing:.04px;margin-right:-1px;padding-top:1px}
.share{width:57px;height:23px;border-radius:12px;background:#1966d5;display:flex;align-items:center;justify-content:center;gap:4px;color:#fff;font-size:11px;font-weight:500}
.tsearch{margin-left:9px;color:#bdbdbd}.sep.s2{margin-left:9px}.tlay{margin-left:15px}.tpan{margin-left:15px}
.control{height:31px;flex:none;display:flex;align-items:center;border-bottom:1px solid #353535;font-size:10.500px}
.ctl-name{width:124px;padding-left:13px}
.dd{width:15px;height:10px;color:#e5e5e5}
.st{width:15px;height:16px;color:#e0e0e0}
.sw{width:34px;height:18px;display:flex;align-items:center;background:#424242;outline:1px solid #555}
.black{width:18px;height:18px;background:#000;border:1px solid #ccc}
.sw.s2{margin-left:6px}
.u{border-bottom:1px dotted #aaa;padding-bottom:1px;height:15px;line-height:14px}
.c-line{margin-left:11px;width:18px}
.box{height:18px;border:1px solid #565656;display:flex;align-items:center;background:#444;min-width:0}
.box .in{flex:1;height:16px;background:#3a3a3a;padding-left:2px;line-height:18px;font-size:11.300px;border:solid #555;border-width:0 1px;overflow:hidden}
.c-w{width:82px;margin-left:4px}
.graybox{width:81px;height:18px;background:#757575;margin-left:5px}
.dim{color:#666}
.c-op{margin-left:9px;width:49px}
.c-opv{width:74px;margin-left:4px}
.rot{transform:rotate(-90deg)}
.wheel{margin-left:15px}
.c-ch{margin-left:17px;width:27px}
.c-font{width:196px;margin-left:4px;background:#3a3a3a}
.c-font>svg:first-child,.font1>svg:first-child{margin-left:1px;color:#aaa}
.tinyc{width:9px;height:9px;color:#aaa}
.fname{flex:1;font-size:11px;padding-left:1px;overflow:hidden;line-height:16px}
.font1 .fname{letter-spacing:.03px}
.c-sty{width:102px;margin-left:5px}
.c-sz{width:82px;margin-left:6px}
.l1,.l2,.l3{width:21px;margin-left:8px}.l2,.l3{margin-left:13px}
.ctl-icons{margin-left:74px}
main{flex:1;min-height:0;display:flex}
.collapse{height:11px;flex:none;background:#3d3d3d;padding:2px 0 0 5px}
.tools{width:66px;flex:none;border-right:2px solid #333;border-left:1px solid #333;display:flex;flex-direction:column}
.grip{width:17px;height:4px;margin:3px 0 0 22px;background:repeating-linear-gradient(90deg,#333 0 1px,transparent 1px 2px)}
.toolgrid{display:grid;grid-template-columns:25px 25px;column-gap:2px;grid-auto-rows:21.350px;place-items:center;margin:9px 0 0 5px}
.toolgrid>svg{width:23px;height:19px;padding:1px 3px;fill:#bebebe;overflow:visible;background:linear-gradient(135deg,transparent 50%,#ccc 50%) right bottom/4px 4px no-repeat}
.toolgrid>.nf{background:none}
.ln{fill:none;stroke:#bebebe;stroke-width:1.300}
.fl{stroke:#bebebe;stroke-width:1.300}
.sel{width:25px;height:20px;background:#252525 linear-gradient(135deg,transparent 50%,#ccc 50%) right 1px bottom 1px/4px 4px no-repeat;border-radius:2px;display:grid;place-items:center}
.sel svg{width:16px;height:16px}
.gradtool{width:15px;height:14px;border:1px solid #bbb;background:linear-gradient(90deg,#333,#bbb)}
.fillstroke{position:relative;height:50px;margin:6px 0 0 5px;flex:none}
.stroke-sw{position:absolute;left:16px;top:16px}
.fill-sw{position:absolute;left:0;top:0;width:31px;height:31px;background:#000;border:1px solid #bbb}
.swp{position:absolute;left:38px;top:1px;width:11px;height:11px}
.dft{position:absolute;left:0;top:36px;width:11px;height:11px}
.trow{display:flex;align-items:center;gap:5px;margin:6px 0 0 7px;height:14px}
.trow i{width:13px;height:13px;border:1px solid #222;background:#000}
.trow .m2{background:linear-gradient(90deg,#fff,#333);width:12px}
.trow svg{margin-left:1px}
.modes{margin:7px 0 0 5px}
.screens{margin:7px 0 0 21px}
.dots{display:flex;gap:2px;margin:19px 0 0 25px}.dots i{width:3px;height:3px;border-radius:50%;background:#ccc}
.left{width:235px;flex:none;border-right:2px solid #393939;display:flex;flex-direction:column;overflow:hidden}
.left section{flex:none}
.tabs{height:24px;flex:none;background:#3a3a3a;display:flex;align-items:center;color:#aaa;font-size:9.900px;border-bottom:1px solid #353535}
.tabs>*{flex:none}
.tabs>span,.tabs>b{height:24px;line-height:23px;border-right:1px solid #353535;overflow:hidden}
.tabs>b{background:#484848;color:#f0f0f0;display:flex;align-items:center;gap:4px;font-weight:500;padding-left:3px}
.tabs>em{flex:1}
.ud{width:5px;height:8px}
.bg{width:10px;height:10px;color:#aaa;margin-right:5px}
.t-char b{width:41px;gap:5px}.t-char span{padding-left:7px;width:34px}.t-char span+span{padding-left:8px;width:65px}
.left section+section{border-top:4px solid #363636}
.char{height:260px;padding-top:5px}
.font1{width:217px;margin-left:5px;background:#3a3a3a}
.font2{width:222px;margin:5px 0 0 5px}
.font2 .in{border-left:0;padding-left:4px}
hr{border:0;height:1px;background:#414141;margin:6px 4px 0}
.crow+hr{margin-top:3px}
.crow{height:23px;display:grid;grid-template-columns:24px 82px 40px 82px;align-items:center}
hr+.crow{margin-top:2px}
.crow .ci:nth-child(3){margin-left:19px}
.ci{width:18px;height:16px;margin-left:4px;fill:#bdbdbd;font-family:"Liberation Serif",serif;font-weight:700;overflow:visible}
.thin{font-weight:400}
.ci .ja{font-family:"Noto Sans CJK JP",sans-serif;font-weight:400}.ci .sans{font-family:"Liberation Sans",sans-serif;font-weight:400}
.ci .ln{stroke-width:1}
.pick{justify-content:space-between;padding-left:4px;font-size:10px}
.tt{display:grid;grid-template-columns:27px 61px 26px 63px 25px 20px;padding-left:8px;height:20px;margin-top:6px;align-items:center;font:14px "Liberation Serif",serif;color:#c4c4c4;line-height:16px;-webkit-text-stroke:.3px #c4c4c4}
.tt span:first-child{font-size:13px;letter-spacing:.5px}
.tt small{font-size:11px}.tt sup,.tt sub{font-size:7px;line-height:0}
.ul{text-decoration:underline}.stk{text-decoration:line-through}
.lang{display:flex;align-items:center;margin:6px 0 0 5px}
.lang .pick:first-child{width:102px}.lang .off{width:82px;color:#777;background:#444;border-color:#4b4b4b}.off .dd{color:#666}
.aa{width:39px;padding-left:19px;font-size:11px}.aa sub{line-height:0;font-size:10px}
.t-tr span{width:35px;padding-left:7px}.t-tr b{width:40px;padding-left:4px}.t-tr b+span{width:94px;padding-left:8px}
.trans{height:73px;display:grid;grid-template-columns:28px 176px 1fr;grid-template-rows:51px 20px}
.ref{margin:17px 0 0 4px}
.unl{margin:18px 0 0 6px;color:#bbb}
.xy{display:grid;grid-template-columns:18px 66px 25px 66px;row-gap:5px;margin-top:6px;height:41px;align-items:center;font-size:10.500px}
.xy>span:nth-child(odd){color:#c4c4c4}.xy>span:nth-child(4n+3){padding-left:5px}
.fld{height:18px;background:#393939;border:1px solid #555;line-height:18px;padding-left:4px;overflow:hidden;font-size:11.200px}
.ang{grid-column:2/4;display:flex;align-items:center}
.ang>svg:first-child{margin-left:1px;margin-right:2px}.ang .box{width:59px}.ang .box .in{border-left:0}.shr{margin:0 2px 0 7px}
.t-col span{width:74px;padding-left:8px}.t-col b{width:50px;gap:5px}
.color{display:grid;grid-template-columns:42px 1fr;grid-template-rows:101px 13px 1fr}
.sliders{display:grid;grid-template-columns:17px 106.500px 33px 20px;grid-auto-rows:22.500px;align-items:center;font-size:11px;color:#c4c4c4;padding-left:4px;margin-top:6px}
.sliders .fld{width:31px;height:18px;color:#eee}
.bar{position:relative;width:100px;height:4px;margin-bottom:1px}
.bar.c{background:#101728}.bar.m{background:#250810}.bar.y{background:#25230c}.bar.k{background:linear-gradient(90deg,#fff,#222)}
.bar u{position:absolute;left:-5px;top:3px;width:9px;height:7px;background:#bdbdbd;clip-path:polygon(50% 0,100% 55%,100% 100%,0 100%,0 55%)}
.bar.k u{left:95px}
.mini{grid-column:1/3;margin-left:4px}
.spectrum{grid-column:1/3;width:213px;height:90px;margin:8px 0 0 5px;border:1px solid #555;background:linear-gradient(#fffffff8,#fff9 27%,#fff2 50%,#fff0 60%,#0000 68%,#000c 98%),linear-gradient(90deg,#e8121b 0,#ee751a 9%,#f5ef2c 16%,#86c926 25%,#4cba27 36%,#39b98b 46%,#23aee0 53%,#1958a7 61%,#133a91 67%,#3b258a 75%,#7d187e 83%,#dc087d 93%,#e30b22)}
.doc{width:730px;flex:none;display:flex;flex-direction:column;background:#3b3b3b;border-right:1px solid #303030}
.doctabs{height:25px;flex:none;display:flex;font-size:10.050px;color:#aaa}
.doctabs span,.doctabs b{display:flex;align-items:center;padding-left:7px;gap:7px;font-weight:400;width:249px}
.doctabs b{background:#484848;color:#e8e8e8;width:250px;padding-left:6px}
.doctabs i{font-size:12px;width:7px}
.docbody{height:609px;display:flex;overflow:hidden}
.artboard{width:714px;background:#fff;color:#000;position:relative;overflow:hidden;display:flex;flex:none;font-family:"Noto Serif CJK JP","Noto Serif JP","Noto Sans CJK JP",serif;font-weight:900}
.big{padding:130px 0 0 15px;width:302px;font-size:54.700px;line-height:96px;flex:none}
.small{padding-top:185px;font-size:27.400px;line-height:48px;flex:none;padding-left:1px}
.ruby{display:grid;grid-template-columns:17px 39px 12px 63px 10px 15px 39px 13px 35.500px 10px 14.500px 39.500px 12px 62.500px 8.500px 6.500px 30px;align-items:center;height:48px}
.br{width:8px;height:26px;border:1px solid #222;border-right:0}.br.rt{border:1px solid #222;border-left:0}
.bar1{width:1px;height:26px;background:#333}
.caret{width:1px;height:33px;background:#777;align-self:end;margin-bottom:1px}
.ibeam{position:absolute;left:411px;top:210px}
.vscroll{width:15px;background:#3d3d3d;display:flex;flex-direction:column;align-items:center;color:#999}
.vscroll i{width:12px;height:22px;border-radius:6px;background:#606060;margin:282px 0 auto}
.right{width:249px;flex:none;border-left:1px solid #333;display:flex;flex-direction:column}
.flipx{transform:scaleX(-1);margin-left:231px}
.t-st b{width:40px}.t-st span{width:73px;padding-left:8px;border-right:0}.t-st span:nth-child(3){width:29px}
.t-st span:nth-child(2){clip-path:inset(0 8px 0 0)}.t-st span:nth-child(4){width:72px;clip-path:inset(0 7px 0 0);letter-spacing:-.1px}
.strokep{height:284px;flex:none;padding-top:2px;color:#858585}
.rr{height:24px;display:flex;align-items:center;font-size:10.500px}
.rr label{width:75px;text-align:right;margin-right:2px}
.rr.on{color:#e2e2e2}.w85{width:90px}.w85 .dd{color:#eee}
.tri{fill:#777}.fr{fill:none;stroke:#585858}
.rr .ratio{width:49px}.gf{width:44px;height:18px;background:#505050}
.strokep hr{margin:2px 5px 0}
.dashrow{display:flex;align-items:center;height:28px;color:#eee;font-size:10.500px;padding-left:5px;margin-top:1px}
.dashrow b{font-weight:500;margin-left:5px;width:154px}
.chk{width:11px;height:11px;border-radius:2px;background:linear-gradient(#333,#333) center/5px 2px no-repeat #ccc}
.dashrow svg{margin-left:-1px}
.dashes{display:grid;grid-template-columns:repeat(6,40px);padding-left:5px;height:35px;margin-top:1px;color:#a5a5a5}
.dashes span{width:35px;text-align:center;font-size:10.300px}.dashes i{display:block;height:18px;background:#4e4e4e;color:#686868;line-height:20px;font-size:11px;margin-bottom:2px}
.strokep .dashes+hr{margin-top:3px}
.mid{height:26.500px;color:#9c9c9c}
.mid .dd{color:#777;background:#4e4e4e;height:18px;width:16px;padding:4px 0}
.g1{width:43px;height:18px;background:#757575}.g2{margin-left:10px}
.ex{margin-left:22px}.ex2{margin-left:21px}
.pc{width:59px;height:18px;background:#4e4e4e;display:flex;align-items:center;color:#6c6c6c;font-size:11px;gap:5px}.pc .st{color:#777}.p2{margin-left:9px}
.g3{width:90px;height:18px;background:#757575}.flip{margin-left:21px}
.strokep .prof{height:28px}
.t-ly{border-top:2px solid #333;height:26px}
.t-ly span{width:76px;padding-left:8px}.t-ly b{width:54px;padding-left:8px}
.layers{margin:5px 4px 0 5px;border:1px solid #565656;border-bottom:0;flex:1;min-height:0}
.ly{height:19px;display:flex;align-items:center;font-size:11px;border-bottom:1px solid #505050;position:relative}
.cur{background:#465c6c;margin-right:-1px}
.eye{width:11px;height:10px;margin-left:2px}
.lb{width:3px;height:17px;background:#5371db;margin-left:24px}
.ly .dd{width:10px;margin-left:6px}.th{width:16px;height:16px;margin-left:7px}.sub .th{margin-left:43px}
.ly span{margin-left:5px;flex:1}
.ring{width:7px;height:7px;border:1px solid #bbb;border-radius:50%;margin-right:19px}
.ly:first-child .ring{margin-right:6px}
.sq{width:6px;height:6px;background:#4e70ef;border:1px solid #111;margin-right:7px}
.dbl{width:10px;height:10px;margin-right:3px;background:radial-gradient(circle,transparent 2px,#bbb 2.500px 3px,transparent 3.500px)}
.sq.lg{width:8px;height:8px;margin-right:6px}
.cor{position:absolute;right:0;top:1px;width:5px;height:5px;background:#ccc;clip-path:polygon(0 0,100% 0,100% 100%)}
```
